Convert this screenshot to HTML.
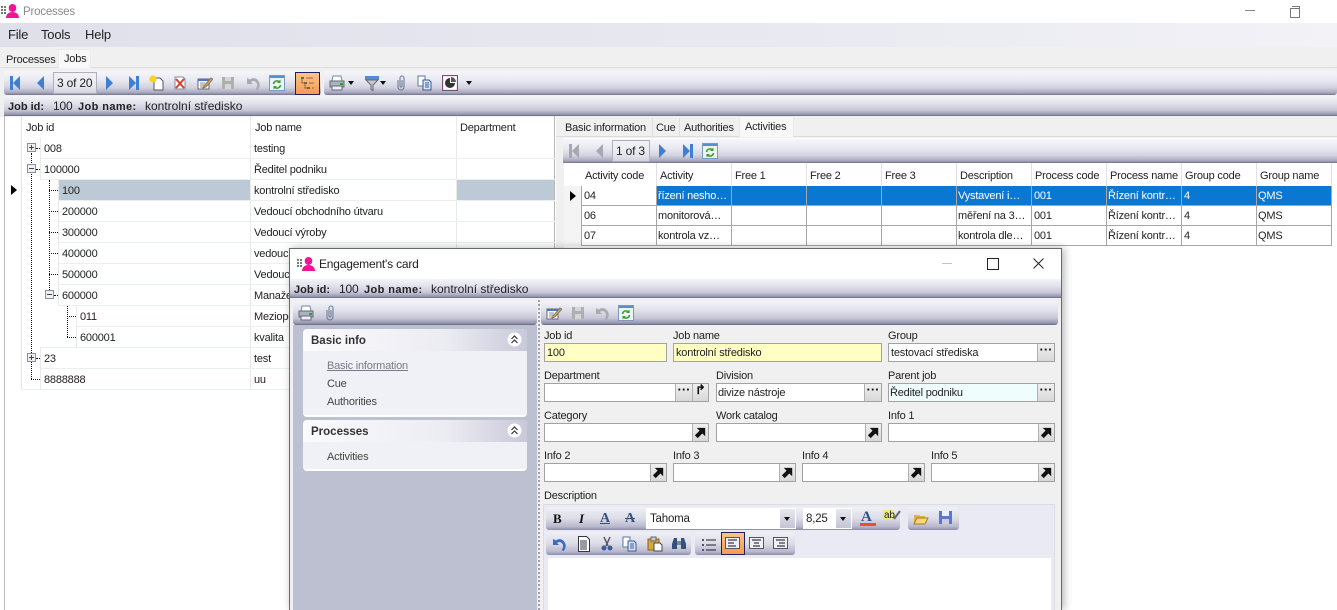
<!DOCTYPE html>
<html><head><meta charset="utf-8"><title>Processes</title>
<style>
html,body{margin:0;padding:0;width:1337px;height:610px;overflow:hidden;background:#fff}
body{position:relative;font-family:"Liberation Sans",Arial,sans-serif;font-size:11px;color:#222}
div,span.t,svg.i{position:absolute}
.t{position:absolute;white-space:nowrap;line-height:14px;letter-spacing:-.2px;margin-top:1px}
.t[style*="font-size:12px"],.t[style*="font-size:13px"]{margin-top:0}
.t.b{letter-spacing:0}
.b{font-weight:bold}
.bar{background:linear-gradient(#f6f6fa 0%,#e8e8f1 40%,#d3d3e1 68%,#a9a9c0 90%,#74748f 100%)}
.band{background:linear-gradient(#f3f3f8 0%,#e0e0eb 40%,#c6c6d6 72%,#9090aa 94%,#62627c 100%)}
.l{background:#eaf0ec;height:1px}
.v{background:#e8eae8;width:1px}
.dv{border-left:1px dotted #111;width:0}
.dh{border-top:1px dotted #111;height:0}
.sel{color:#fff}
.gl{background:#a6a6a6}
.f{box-sizing:border-box;border:1px solid #a2a2a2;background:#fff;height:19px}
.fb{box-sizing:border-box;border-left:1px solid #b0b0b0;background:linear-gradient(#f0f0f0,#d8d8d8);height:17px;text-align:center;font-weight:bold;line-height:12px;font-size:13px;color:#111}
.card{background:#f0f1f6;box-sizing:border-box;border-bottom:2px solid #fff;border-radius:4px}
.ch{background:linear-gradient(90deg,#fbfbfd,#ebebf2 65%,#c8c9d8);border-radius:4px 4px 0 0}
.tb{background:linear-gradient(#f0f0f6 0%,#dcdce8 50%,#b9b9cd 85%,#8d8da8 100%);border-radius:3px}
.cl{width:1px;height:60px;top:186px;background:#a6a6a6}
.ch2{width:1px;height:23px;top:163px;background:#e2e2e2}
svg.i{overflow:visible}
</style></head>
<body>
<svg width="0" height="0" style="position:absolute"><defs>
<symbol id="first" viewBox="0 0 16 16"><path d="M3 1h3v14H3z" fill="currentColor"/><path d="M13 1v14L6 8z" fill="currentColor"/></symbol>
<symbol id="prev" viewBox="0 0 16 16"><path d="M11 1v14L4 8z" fill="currentColor"/></symbol>
<symbol id="next" viewBox="0 0 16 16"><path d="M5 1v14l7-7z" fill="currentColor"/></symbol>
<symbol id="last" viewBox="0 0 16 16"><path d="M3 1v14l7-7z" fill="currentColor"/><path d="M10 1h3v14h-3z" fill="currentColor"/></symbol>
<symbol id="new" viewBox="0 0 16 16"><path d="M5 3h6l3 3v9H5z" fill="#fff" stroke="#556"/><circle cx="4" cy="4" r="3.500" fill="#f7d21e"/></symbol>
<symbol id="del" viewBox="0 0 16 16"><path d="M3 2h8l2 2v10H3z" fill="#fff" stroke="#889"/><path d="M4 4l8 9M12 4l-8 9" stroke="#d8402c" stroke-width="2"/></symbol>
<symbol id="edit" viewBox="0 0 16 16"><path d="M1 4h11v10H1z" fill="#fff" stroke="#667"/><path d="M1 4h11v2H1z" fill="#4a78b8"/><path d="M3 8h5M3 10h5M3 12h4" stroke="#889"/><path d="M7 11l7-8 2 1-7 8-3 1z" fill="#d8b040" stroke="#876"/></symbol>
<symbol id="save" viewBox="0 0 16 16"><path d="M2 2h12v12H2z" fill="#aeb0b0"/><path d="M5 2h6v4H5zM5 9h6v5H5z" fill="#d6d6d6"/></symbol>
<symbol id="undo" viewBox="0 0 16 16"><path d="M2 3v6h6L6 7c2-2 5-1 6 2 .5 2-.5 4-1.500 5l2 1c2-2 3-5 1.500-8C12 3 8 2 5 4.500z" fill="currentColor"/></symbol>
<symbol id="ref" viewBox="0 0 16 16"><path d="M.5.500h15v15H.5z" fill="#eef3f6" stroke="#7a9ac4"/><path d="M1 1h14v2H1z" fill="#5a8cd0"/><path d="M4.500 9a3.500 3.500 0 0 1 5.500-2.500" fill="none" stroke="#3a9c30" stroke-width="1.500"/><path d="M11.500 4.500v3.500H8z" fill="#3a9c30"/><path d="M11.500 10a3.500 3.500 0 0 1-5.500 2.500" fill="none" stroke="#3a9c30" stroke-width="1.500"/><path d="M4.500 14.500V11H8z" fill="#3a9c30"/></symbol>
<symbol id="tree" viewBox="0 0 16 16"><path d="M2 2h3v2H2zM5 7h3v2H5zM8 12h3v2H8z" fill="#666"/><path d="M7 3h7M10 8h5M13 13h2M3 4v4h2M6 9v4h2" stroke="#8a6a40" fill="none"/></symbol>
<symbol id="print" viewBox="0 0 16 16"><path d="M4 1h8l1 5H3z" fill="#fff" stroke="#789"/><path d="M1 6h14v6H1z" fill="#aab4c0" stroke="#667"/><path d="M3 11h10v4H3z" fill="#eef" stroke="#667"/><path d="M11 8h3v2h-3z" fill="#2a2"/></symbol>
<symbol id="filter" viewBox="0 0 16 16"><path d="M1 1h14v4H1z" fill="#5a8ad0"/><path d="M2 5h12l-5 5v6l-2-2v-4z" fill="#c8ccd0" stroke="#667"/></symbol>
<symbol id="clip" viewBox="0 0 16 16"><path d="M5 5v7a3 3 0 0 0 6 0V3a2 2 0 0 0-4 0v8a1 1 0 0 0 2 0V5" fill="none" stroke="#6e7e96" stroke-width="1.100"/></symbol>
<symbol id="copy" viewBox="0 0 16 16"><path d="M1 1h7v10H1z" fill="#fff" stroke="#5a78a8"/><path d="M6 5h6l2 2v8H6z" fill="#d8e4f8" stroke="#3a5a90"/><path d="M8 8h4M8 10h4M8 12h4" stroke="#3a5a90"/></symbol>
<symbol id="chart" viewBox="0 0 16 16"><path d="M.5.500h15v15H.5z" fill="#fff" stroke="#7a4a78" stroke-width="1.200"/><path d="M8 3a5 5 0 1 0 5 5H8z" fill="#333"/><path d="M9 2a5 5 0 0 1 5 5H9z" fill="#555"/></symbol>
<symbol id="darr" viewBox="0 0 8 8"><path d="M1 2h6L4 6z" fill="#111"/></symbol>
<symbol id="goto" viewBox="0 0 16 16"><path d="M2 11l3 3 5-5 3 3V3H4l3 3z" fill="#111"/></symbol>
<symbol id="person" viewBox="0 0 18 14"><path d="M0 2h2v2H0zM3 2h2v2H3zM0 5h2v2H0zM3 5h2v2H3zM0 8h2v2H0zM3 8h2v2H3z" fill="#777"/><ellipse cx="11.500" cy="4" rx="3.800" ry="4" fill="#f0149a"/><path d="M5 14c0-4 3-6 6.500-6s6.500 2 6.500 6z" fill="#f0149a"/></symbol>
</defs></svg>

<!-- title -->
<svg class="i" style="left:1px;top:4px" width="18" height="14"><use href="#person"/></svg>
<span class="t" style="left:23px;top:4px;font-size:11.500px;color:#8a8a8a">Processes</span>
<div style="left:1245px;top:10px;width:10px;height:1px;background:#888"></div>
<div style="left:1290px;top:8px;width:8px;height:8px;border:1px solid #777;background:#fff"></div>
<div style="left:1292px;top:6px;width:7px;height:1px;background:#777"></div><div style="left:1299px;top:6px;width:1px;height:7px;background:#777"></div>

<!-- menu -->
<div style="left:0;top:23px;width:1337px;height:24px;background:linear-gradient(90deg,#dfe0ea,#e9e9f1 60%,#f2f2f7)"></div>
<span class="t" style="left:8px;top:28px;font-size:13px">File</span>
<span class="t" style="left:41px;top:28px;font-size:13px">Tools</span>
<span class="t" style="left:85px;top:28px;font-size:13px">Help</span>

<!-- tabs + main gray area -->
<div style="left:0;top:47px;width:1337px;height:70px;background:#f0f0f0"></div>
<div style="left:0;top:67px;width:1337px;height:1px;background:#dcdcdc"></div>
<div style="left:58px;top:49px;width:33px;height:19px;background:#f8f8f8;border:1px solid #eaeaea;border-bottom:0;box-sizing:border-box"></div>
<span class="t" style="left:6px;top:52px">Processes</span>
<span class="t" style="left:64px;top:51px">Jobs</span>

<!-- main toolbar -->
<div class="bar" style="left:4px;top:71px;width:317px;height:24px;border-radius:3px"></div>
<div class="bar" style="left:324px;top:71px;width:1013px;height:24px;border-radius:3px"></div>
<div style="left:53px;top:72px;width:44px;height:22px;box-sizing:border-box;border:1px solid #b0b0bc;background:rgba(240,240,245,.6)"></div>
<span class="t" style="left:57px;top:76px;font-size:12px">3 of 20</span>
<div style="left:295px;top:72px;width:25px;height:23px;box-sizing:border-box;border:1px solid #22205a;background:linear-gradient(#fcc48a,#f79a50)"></div>
<svg class="i" style="left:7px;top:75px;color:#4080d4" width="16" height="16"><use href="#first"/></svg>
<svg class="i" style="left:33px;top:75px;color:#4080d4" width="16" height="16"><use href="#prev"/></svg>
<svg class="i" style="left:101px;top:75px;color:#4080d4" width="16" height="16"><use href="#next"/></svg>
<svg class="i" style="left:126px;top:75px;color:#4080d4" width="16" height="16"><use href="#last"/></svg>
<svg class="i" style="left:149px;top:75px" width="16" height="16"><use href="#new"/></svg>
<svg class="i" style="left:172px;top:75px" width="16" height="16"><use href="#del"/></svg>
<svg class="i" style="left:197px;top:75px" width="16" height="16"><use href="#edit"/></svg>
<svg class="i" style="left:220px;top:75px" width="16" height="16"><use href="#save"/></svg>
<svg class="i" style="left:245px;top:75px;color:#aaaab0" width="16" height="16"><use href="#undo"/></svg>
<svg class="i" style="left:269px;top:75px" width="16" height="16"><use href="#ref"/></svg>
<svg class="i" style="left:299px;top:75px" width="16" height="16"><use href="#tree"/></svg>
<svg class="i" style="left:329px;top:75px" width="16" height="16"><use href="#print"/></svg>
<svg class="i" style="left:347px;top:79px" width="8" height="8"><use href="#darr"/></svg>
<svg class="i" style="left:364px;top:75px" width="16" height="16"><use href="#filter"/></svg>
<svg class="i" style="left:379px;top:79px" width="8" height="8"><use href="#darr"/></svg>
<svg class="i" style="left:393px;top:75px" width="16" height="16"><use href="#clip"/></svg>
<svg class="i" style="left:417px;top:75px" width="16" height="16"><use href="#copy"/></svg>
<svg class="i" style="left:442px;top:75px" width="16" height="16"><use href="#chart"/></svg>
<svg class="i" style="left:465px;top:79px" width="8" height="8"><use href="#darr"/></svg>

<!-- job band -->
<div class="band" style="left:4px;top:96px;width:1333px;height:20px"></div>
<span class="t b" style="left:8px;top:99px">Job id:</span>
<span class="t" style="left:53px;top:99px;font-size:12px">100</span>
<span class="t b" style="left:78px;top:99px;letter-spacing:.4px">Job name:</span>
<span class="t" style="left:145px;top:99px;font-size:12px;letter-spacing:0">kontrolní středisko</span>

<!-- left grid -->
<div style="left:4px;top:116px;width:1px;height:494px;background:#bbb"></div>
<div style="left:21px;top:116px;width:1px;height:274px;background:#e6e6e6"></div>
<div class="v" style="left:250px;top:116px;height:274px"></div>
<div class="v" style="left:456px;top:116px;height:274px"></div>
<div style="left:554px;top:116px;width:1px;height:132px;background:#b8b8b8"></div>
<span class="t" style="left:26px;top:120px">Job id</span>
<span class="t" style="left:255px;top:120px">Job name</span>
<span class="t" style="left:460px;top:120px">Department</span>

<div class="l" style="left:40px;top:158px;width:515px"></div>
<div class="l" style="left:40px;top:179px;width:515px"></div>
<div style="left:59px;top:180px;width:191px;height:20px;background:#bccad8"></div>
<div style="left:457px;top:180px;width:97px;height:20px;background:#bccad8"></div>
<div class="l" style="left:58px;top:200px;width:497px"></div>
<div class="l" style="left:58px;top:221px;width:497px"></div>
<div class="l" style="left:58px;top:242px;width:497px"></div>
<div class="l" style="left:58px;top:263px;width:497px"></div>
<div class="l" style="left:58px;top:284px;width:497px"></div>
<div class="l" style="left:58px;top:305px;width:497px"></div>
<div class="l" style="left:76px;top:326px;width:479px"></div>
<div class="l" style="left:40px;top:347px;width:515px"></div>
<div class="l" style="left:40px;top:368px;width:515px"></div>
<div class="l" style="left:21px;top:389px;width:534px"></div>
<div class="v" style="left:40px;top:138px;height:42px"></div>
<div class="v" style="left:58px;top:180px;height:126px"></div>
<div class="v" style="left:76px;top:306px;height:42px"></div>
<div class="v" style="left:40px;top:348px;height:42px"></div>

<!-- tree lines -->
<div class="dv" style="left:31px;top:153px;height:226px"></div>
<div class="dv" style="left:49px;top:180px;height:110px"></div>
<div class="dv" style="left:67px;top:306px;height:31px"></div>
<div class="dh" style="left:36px;top:148px;width:4px"></div>
<div class="dh" style="left:36px;top:169px;width:4px"></div>
<div class="dh" style="left:49px;top:190px;width:9px"></div>
<div class="dh" style="left:49px;top:211px;width:9px"></div>
<div class="dh" style="left:49px;top:232px;width:9px"></div>
<div class="dh" style="left:49px;top:253px;width:9px"></div>
<div class="dh" style="left:49px;top:274px;width:9px"></div>
<div class="dh" style="left:54px;top:295px;width:4px"></div>
<div class="dh" style="left:67px;top:316px;width:9px"></div>
<div class="dh" style="left:67px;top:337px;width:9px"></div>
<div class="dh" style="left:36px;top:358px;width:4px"></div>
<div class="dh" style="left:31px;top:379px;width:9px"></div>
<!-- expanders -->
<svg class="i" style="left:27px;top:143px" width="9" height="9"><path d="M.5.500h8v8h-8z" fill="#eef0f4" stroke="#8a90a0"/><path d="M2 4.500h5M4.500 2v5" stroke="#445"/></svg>
<svg class="i" style="left:27px;top:164px" width="9" height="9"><path d="M.5.500h8v8h-8z" fill="#eef0f4" stroke="#8a90a0"/><path d="M2 4.500h5" stroke="#445"/></svg>
<svg class="i" style="left:45px;top:290px" width="9" height="9"><path d="M.5.500h8v8h-8z" fill="#eef0f4" stroke="#8a90a0"/><path d="M2 4.500h5" stroke="#445"/></svg>
<svg class="i" style="left:27px;top:353px" width="9" height="9"><path d="M.5.500h8v8h-8z" fill="#eef0f4" stroke="#8a90a0"/><path d="M2 4.500h5M4.500 2v5" stroke="#445"/></svg>
<svg class="i" style="left:11px;top:185px" width="6" height="10"><path d="M0 0v10l6-5z" fill="#000"/></svg>

<span class="t" style="left:44px;top:141px">008</span><span class="t" style="left:254px;top:141px">testing</span>
<span class="t" style="left:44px;top:162px">100000</span><span class="t" style="left:254px;top:162px">Ředitel podniku</span>
<span class="t" style="left:62px;top:183px">100</span><span class="t" style="left:254px;top:183px">kontrolní středisko</span>
<span class="t" style="left:62px;top:204px">200000</span><span class="t" style="left:254px;top:204px">Vedoucí obchodního útvaru</span>
<span class="t" style="left:62px;top:225px">300000</span><span class="t" style="left:254px;top:225px">Vedoucí výroby</span>
<span class="t" style="left:62px;top:246px">400000</span><span class="t" style="left:254px;top:246px">vedoucí</span>
<span class="t" style="left:62px;top:267px">500000</span><span class="t" style="left:254px;top:267px">Vedoucí</span>
<span class="t" style="left:62px;top:288px">600000</span><span class="t" style="left:254px;top:288px">Manažer</span>
<span class="t" style="left:80px;top:309px">011</span><span class="t" style="left:254px;top:309px">Meziopera</span>
<span class="t" style="left:80px;top:330px">600001</span><span class="t" style="left:254px;top:330px">kvalita</span>
<span class="t" style="left:44px;top:351px">23</span><span class="t" style="left:254px;top:351px">test</span>
<span class="t" style="left:44px;top:372px">8888888</span><span class="t" style="left:254px;top:372px">uu</span>

<!-- right panel -->
<div style="left:556px;top:116px;width:781px;height:22px;background:#f0f0f0"></div>
<div style="left:556px;top:136px;width:781px;height:1px;background:#dcdcdc"></div>
<div style="left:556px;top:138px;width:8px;height:110px;background:#f0f0f0"></div>
<div style="left:739px;top:116px;width:55px;height:21px;background:#f8f8f8;border:1px solid #eaeaea;border-bottom:0;box-sizing:border-box"></div>
<div style="left:652px;top:118px;width:1px;height:18px;background:#ddd"></div>
<div style="left:679px;top:118px;width:1px;height:18px;background:#ddd"></div>
<span class="t" style="left:565px;top:120px">Basic information</span>
<span class="t" style="left:656px;top:120px">Cue</span>
<span class="t" style="left:684px;top:120px">Authorities</span>
<span class="t" style="left:745px;top:119px">Activities</span>

<div class="bar" style="left:563px;top:139px;width:774px;height:24px"></div>
<div style="left:612px;top:140px;width:38px;height:22px;box-sizing:border-box;border:1px solid #b0b0bc;background:rgba(240,240,245,.6)"></div>
<span class="t" style="left:616px;top:144px;font-size:12px">1 of 3</span>
<svg class="i" style="left:566px;top:143px;color:#a8a8b0" width="16" height="16"><use href="#first"/></svg>
<svg class="i" style="left:592px;top:143px;color:#a8a8b0" width="16" height="16"><use href="#prev"/></svg>
<svg class="i" style="left:654px;top:143px;color:#4080d4" width="16" height="16"><use href="#next"/></svg>
<svg class="i" style="left:680px;top:143px;color:#4080d4" width="16" height="16"><use href="#last"/></svg>
<svg class="i" style="left:702px;top:143px" width="16" height="16"><use href="#ref"/></svg>

<!-- activities grid -->
<div style="left:564px;top:163px;width:768px;height:83px;background:#fff"></div>
<div style="left:564px;top:186px;width:17px;height:60px;background:#f4f4f4"></div>
<div style="left:656px;top:186px;width:676px;height:20px;background:#0a78d2"></div>
<div class="gl" style="left:581px;top:205px;width:751px;height:1px"></div>
<div class="gl" style="left:581px;top:225px;width:751px;height:1px"></div>
<div class="gl" style="left:581px;top:245px;width:751px;height:1px"></div>
<div class="ch2" style="left:656px"></div><div class="ch2" style="left:731px"></div><div class="ch2" style="left:806px"></div><div class="ch2" style="left:881px"></div><div class="ch2" style="left:956px"></div><div class="ch2" style="left:1031px"></div><div class="ch2" style="left:1106px"></div><div class="ch2" style="left:1181px"></div><div class="ch2" style="left:1256px"></div><div class="ch2" style="left:1331px"></div>
<div class="cl" style="left:581px"></div><div class="cl" style="left:656px"></div><div class="cl" style="left:731px"></div><div class="cl" style="left:806px"></div><div class="cl" style="left:881px"></div><div class="cl" style="left:956px"></div><div class="cl" style="left:1031px"></div><div class="cl" style="left:1106px"></div><div class="cl" style="left:1181px"></div><div class="cl" style="left:1256px"></div><div class="cl" style="left:1331px"></div>
<svg class="i" style="left:570px;top:191px" width="6" height="10"><path d="M0 0v10l6-5z" fill="#000"/></svg>

<span class="t" style="left:585px;top:168px">Activity code</span><span class="t" style="left:660px;top:168px">Activity</span><span class="t" style="left:735px;top:168px">Free 1</span><span class="t" style="left:810px;top:168px">Free 2</span><span class="t" style="left:885px;top:168px">Free 3</span><span class="t" style="left:960px;top:168px">Description</span><span class="t" style="left:1035px;top:168px">Process code</span><span class="t" style="left:1110px;top:168px">Process name</span><span class="t" style="left:1185px;top:168px">Group code</span><span class="t" style="left:1260px;top:168px">Group name</span>

<span class="t" style="left:584px;top:188px">04</span><span class="t sel" style="left:658px;top:188px">řízení nesho…</span><span class="t sel" style="left:958px;top:188px">Vystavení i…</span><span class="t sel" style="left:1034px;top:188px">001</span><span class="t sel" style="left:1108px;top:188px">Řízení kontr…</span><span class="t sel" style="left:1184px;top:188px">4</span><span class="t sel" style="left:1258px;top:188px">QMS</span>
<span class="t" style="left:584px;top:208px">06</span><span class="t" style="left:658px;top:208px">monitorová…</span><span class="t" style="left:958px;top:208px">měření na 3…</span><span class="t" style="left:1034px;top:208px">001</span><span class="t" style="left:1108px;top:208px">Řízení kontr…</span><span class="t" style="left:1184px;top:208px">4</span><span class="t" style="left:1258px;top:208px">QMS</span>
<span class="t" style="left:584px;top:228px">07</span><span class="t" style="left:658px;top:228px">kontrola vz…</span><span class="t" style="left:958px;top:228px">kontrola dle…</span><span class="t" style="left:1034px;top:228px">001</span><span class="t" style="left:1108px;top:228px">Řízení kontr…</span><span class="t" style="left:1184px;top:228px">4</span><span class="t" style="left:1258px;top:228px">QMS</span>

<!-- MODAL -->
<div style="left:289px;top:248px;width:773px;height:362px;background:#f0f0f0;box-sizing:border-box;border:1px solid #6a6a6a;border-bottom:0;box-shadow:2px 0 8px rgba(0,0,0,.3)"></div>
<div style="left:290px;top:249px;width:771px;height:30px;background:#fff"></div>
<svg class="i" style="left:297px;top:257px" width="18" height="14"><use href="#person"/></svg>
<span class="t" style="left:319px;top:257px;font-size:12px">Engagement's card</span>
<div style="left:942px;top:263px;width:10px;height:1px;background:#c4c4c4"></div>
<div style="left:987px;top:258px;width:10px;height:10px;box-sizing:content-box;border:1px solid #222"></div>
<svg class="i" style="left:1033px;top:258px" width="11" height="11"><path d="M.5.500l10 10M10.500.500l-10 10" stroke="#222" fill="none"/></svg>

<div class="band" style="left:290px;top:279px;width:771px;height:19px"></div>
<span class="t b" style="left:294px;top:282px">Job id:</span>
<span class="t" style="left:339px;top:282px;font-size:12px">100</span>
<span class="t b" style="left:364px;top:282px;letter-spacing:.4px">Job name:</span>
<span class="t" style="left:431px;top:282px;font-size:12px;letter-spacing:0">kontrolní středisko</span>

<!-- sidebar -->
<div style="left:293px;top:325px;width:244px;height:285px;background:#bcc0d1"></div>
<div class="band" style="left:293px;top:301px;width:244px;height:24px;border-radius:3px"></div>
<div style="left:538px;top:300px;width:2px;height:310px;border-left:2px dotted #a0a0a8;box-sizing:border-box"></div>
<svg class="i" style="left:298px;top:305px" width="16" height="16"><use href="#print"/></svg>
<svg class="i" style="left:322px;top:305px" width="16" height="16"><use href="#clip"/></svg>

<div class="card" style="left:303px;top:329px;width:224px;height:88px"></div>
<div class="ch" style="left:303px;top:329px;width:224px;height:22px"></div>
<span class="t b" style="left:311px;top:333px;font-size:11.500px;color:#333">Basic info</span>
<svg class="i" style="left:507px;top:332px" width="15" height="15"><circle cx="7.500" cy="7.500" r="7" fill="#fff"/><path d="M4.500 7l3-3 3 3M4.500 11l3-3 3 3" fill="none" stroke="#333" stroke-width="1.200"/></svg>
<span class="t" style="left:327px;top:358px;color:#7a7a88;text-decoration:underline">Basic information</span>
<span class="t" style="left:327px;top:376px;color:#444">Cue</span>
<span class="t" style="left:327px;top:394px;color:#444">Authorities</span>

<div class="card" style="left:303px;top:420px;width:224px;height:51px"></div>
<div class="ch" style="left:303px;top:420px;width:224px;height:22px"></div>
<span class="t b" style="left:311px;top:424px;font-size:11.500px;color:#333">Processes</span>
<svg class="i" style="left:507px;top:423px" width="15" height="15"><circle cx="7.500" cy="7.500" r="7" fill="#fff"/><path d="M4.500 7l3-3 3 3M4.500 11l3-3 3 3" fill="none" stroke="#333" stroke-width="1.200"/></svg>
<span class="t" style="left:327px;top:449px;color:#444">Activities</span>

<!-- form toolbar -->
<div class="band" style="left:541px;top:301px;width:517px;height:24px;border-radius:3px"></div>
<svg class="i" style="left:546px;top:305px" width="16" height="16"><use href="#edit"/></svg>
<svg class="i" style="left:570px;top:305px" width="16" height="16"><use href="#save"/></svg>
<svg class="i" style="left:594px;top:305px;color:#aaaab0" width="16" height="16"><use href="#undo"/></svg>
<svg class="i" style="left:618px;top:305px" width="16" height="16"><use href="#ref"/></svg>

<!-- form row 1 -->
<span class="t" style="left:544px;top:328px">Job id</span>
<span class="t" style="left:673px;top:328px">Job name</span>
<span class="t" style="left:888px;top:328px">Group</span>
<div class="f" style="left:544px;top:343px;width:123px;background:#ffffc4"></div>
<span class="t" style="left:547px;top:345px">100</span>
<div class="f" style="left:673px;top:343px;width:209px;background:#ffffc4"></div>
<span class="t" style="left:676px;top:345px">kontrolní středisko</span>
<div class="f" style="left:888px;top:343px;width:167px"></div>
<span class="t" style="left:891px;top:345px">testovací střediska</span>
<div class="fb" style="left:1037px;top:344px;width:17px">···</div>

<!-- form row 2 -->
<span class="t" style="left:544px;top:368px">Department</span>
<span class="t" style="left:716px;top:368px">Division</span>
<span class="t" style="left:888px;top:368px">Parent job</span>
<div class="f" style="left:544px;top:383px;width:165px"></div>
<div class="fb" style="left:675px;top:384px;width:17px">···</div>
<div class="fb" style="left:692px;top:384px;width:16px">↱</div>
<div class="f" style="left:716px;top:383px;width:166px"></div>
<span class="t" style="left:718px;top:385px">divize nástroje</span>
<div class="fb" style="left:864px;top:384px;width:17px">···</div>
<div class="f" style="left:888px;top:383px;width:167px;background:#effdfd"></div>
<span class="t" style="left:890px;top:385px">Ředitel podniku</span>
<div class="fb" style="left:1037px;top:384px;width:17px">···</div>

<!-- form row 3 -->
<span class="t" style="left:544px;top:408px">Category</span>
<span class="t" style="left:716px;top:408px">Work catalog</span>
<span class="t" style="left:888px;top:408px">Info 1</span>
<div class="f" style="left:544px;top:423px;width:165px"></div>
<div class="fb" style="left:692px;top:424px;width:16px"></div>
<svg class="i" style="left:693px;top:425px" width="15" height="15"><use href="#goto"/></svg>
<div class="f" style="left:716px;top:423px;width:166px"></div>
<div class="fb" style="left:865px;top:424px;width:16px"></div>
<svg class="i" style="left:866px;top:425px" width="15" height="15"><use href="#goto"/></svg>
<div class="f" style="left:888px;top:423px;width:167px"></div>
<div class="fb" style="left:1038px;top:424px;width:16px"></div>
<svg class="i" style="left:1039px;top:425px" width="15" height="15"><use href="#goto"/></svg>

<!-- form row 4 -->
<span class="t" style="left:544px;top:448px">Info 2</span>
<span class="t" style="left:673px;top:448px">Info 3</span>
<span class="t" style="left:802px;top:448px">Info 4</span>
<span class="t" style="left:931px;top:448px">Info 5</span>
<div class="f" style="left:544px;top:463px;width:123px"></div>
<div class="fb" style="left:650px;top:464px;width:16px"></div>
<svg class="i" style="left:651px;top:465px" width="15" height="15"><use href="#goto"/></svg>
<div class="f" style="left:673px;top:463px;width:123px"></div>
<div class="fb" style="left:779px;top:464px;width:16px"></div>
<svg class="i" style="left:780px;top:465px" width="15" height="15"><use href="#goto"/></svg>
<div class="f" style="left:802px;top:463px;width:123px"></div>
<div class="fb" style="left:908px;top:464px;width:16px"></div>
<svg class="i" style="left:909px;top:465px" width="15" height="15"><use href="#goto"/></svg>
<div class="f" style="left:931px;top:463px;width:124px"></div>
<div class="fb" style="left:1038px;top:464px;width:16px"></div>
<svg class="i" style="left:1039px;top:465px" width="15" height="15"><use href="#goto"/></svg>

<!-- description editor -->
<span class="t" style="left:544px;top:488px">Description</span>
<div style="left:543px;top:504px;width:512px;height:106px;background:#e9eaf3;border:1px solid #dcdce4;box-sizing:border-box;border-bottom:0"></div>
<div class="tb" style="left:546px;top:507px;width:354px;height:23px"></div>
<div class="tb" style="left:908px;top:507px;width:51px;height:23px"></div>
<div class="tb" style="left:546px;top:532px;width:145px;height:23px"></div>
<div class="tb" style="left:695px;top:532px;width:100px;height:23px"></div>
<div style="left:548px;top:558px;width:503px;height:52px;background:#fff"></div>

<span class="t" style="left:553px;top:510px;font:bold 13px/16px 'Liberation Serif',serif;color:#111">B</span>
<span class="t" style="left:579px;top:510px;font:italic bold 13px/16px 'Liberation Serif',serif;color:#111">I</span>
<span class="t" style="left:600px;top:510px;font:bold 14px/16px 'Liberation Serif',serif;color:#34507c;text-decoration:underline">A</span>
<span class="t" style="left:625px;top:510px;font:bold 14px/16px 'Liberation Serif',serif;color:#34507c;text-decoration:line-through">A</span>
<div style="left:646px;top:508px;width:150px;height:21px;background:#fff"></div>
<span class="t" style="left:650px;top:511px;font-size:11.500px">Tahoma</span>
<div style="left:780px;top:509px;width:15px;height:19px;background:linear-gradient(#e8e8f0,#c4c4d4)"></div>
<svg class="i" style="left:783px;top:515px" width="8" height="8"><use href="#darr"/></svg>
<div style="left:803px;top:508px;width:49px;height:21px;background:#fff"></div>
<span class="t" style="left:806px;top:511px;font-size:11.500px">8,25</span>
<div style="left:836px;top:509px;width:15px;height:19px;background:linear-gradient(#e8e8f0,#c4c4d4)"></div>
<svg class="i" style="left:839px;top:515px" width="8" height="8"><use href="#darr"/></svg>
<span class="t" style="left:861px;top:508px;font:bold 15px/16px 'Liberation Serif',serif;color:#34507c">A</span>
<div style="left:860px;top:523px;width:16px;height:3px;background:#f0501e"></div>
<div style="left:883px;top:510px;width:11px;height:9px;background:#eeea80"></div>
<span class="t" style="left:884px;top:509px;font-size:10px;line-height:11px">ab</span>
<svg class="i" style="left:893px;top:510px" width="8" height="10"><path d="M1 9l6-8" stroke="#667" stroke-width="2"/></svg>
<svg class="i" style="left:913px;top:510px" width="16" height="16"><path d="M1 14V5h5l1 1h5v8z" fill="#e2b040"/><path d="M1 14l3-6h11l-3 6z" fill="#f6d878" stroke="#a87c20"/></svg>
<svg class="i" style="left:938px;top:510px" width="15" height="15"><path d="M1 1h13v13H1z" fill="#5a78d0"/><path d="M4 1h7v5H4z" fill="#eef"/><path d="M4 9h7v5H4z" fill="#ccd"/></svg>

<svg class="i" style="left:551px;top:536px;color:#3a6ac4" width="16" height="16"><use href="#undo"/></svg>
<svg class="i" style="left:577px;top:536px" width="14" height="16"><path d="M1.500.500h8l3 3v12h-11z" fill="#fff" stroke="#334"/><path d="M3 5h7M3 7h7M3 9h7M3 11h7M3 13h7" stroke="#334"/></svg>
<svg class="i" style="left:600px;top:536px" width="14" height="16"><path d="M4 1l4 9M10 1l-4 9" stroke="#556" stroke-width="1.500"/><circle cx="4" cy="12" r="2.500" fill="#3a5a9c"/><circle cx="10" cy="12" r="2.500" fill="#3a5a9c"/></svg>
<svg class="i" style="left:622px;top:536px" width="16" height="16"><use href="#copy"/></svg>
<svg class="i" style="left:647px;top:536px" width="16" height="16"><path d="M1 3h11v11H1z" fill="#d8a83c" stroke="#86651e"/><path d="M4 1h5v4H4z" fill="#ccc" stroke="#666"/><path d="M7 7h6l2 2v6H7z" fill="#fff" stroke="#445"/></svg>
<svg class="i" style="left:671px;top:536px" width="16" height="16"><path d="M1 8l2-6h3v11H1zM15 8l-2-6h-3v11h5z" fill="#34507c"/><path d="M6 5h4v4H6z" fill="#789"/></svg>
<svg class="i" style="left:701px;top:536px" width="16" height="16"><path d="M1 3h2v2H1zM1 8h2v2H1zM1 13h2v2H1z" fill="#556"/><path d="M5 4h10M5 9h10M5 14h10" stroke="#222"/></svg>
<div style="left:721px;top:532px;width:24px;height:23px;box-sizing:border-box;border:1px solid #22205a;background:linear-gradient(#fcc48a,#f79a50)"></div>
<svg class="i" style="left:725px;top:536px" width="16" height="15"><path d="M.5 1.500h14v11H.5z" fill="#eef0f6" stroke="#556"/><path d="M3 4h9M3 7h6M3 10h8" stroke="#111"/></svg>
<svg class="i" style="left:749px;top:536px" width="16" height="15"><path d="M.5 1.500h14v11H.5z" fill="#eef0f6" stroke="#556"/><path d="M3 4h9M5 7h5M4 10h7" stroke="#111"/></svg>
<svg class="i" style="left:773px;top:536px" width="16" height="15"><path d="M.5 1.500h14v11H.5z" fill="#eef0f6" stroke="#556"/><path d="M3 4h9M6 7h6M4 10h8" stroke="#111"/></svg>
</body></html>
